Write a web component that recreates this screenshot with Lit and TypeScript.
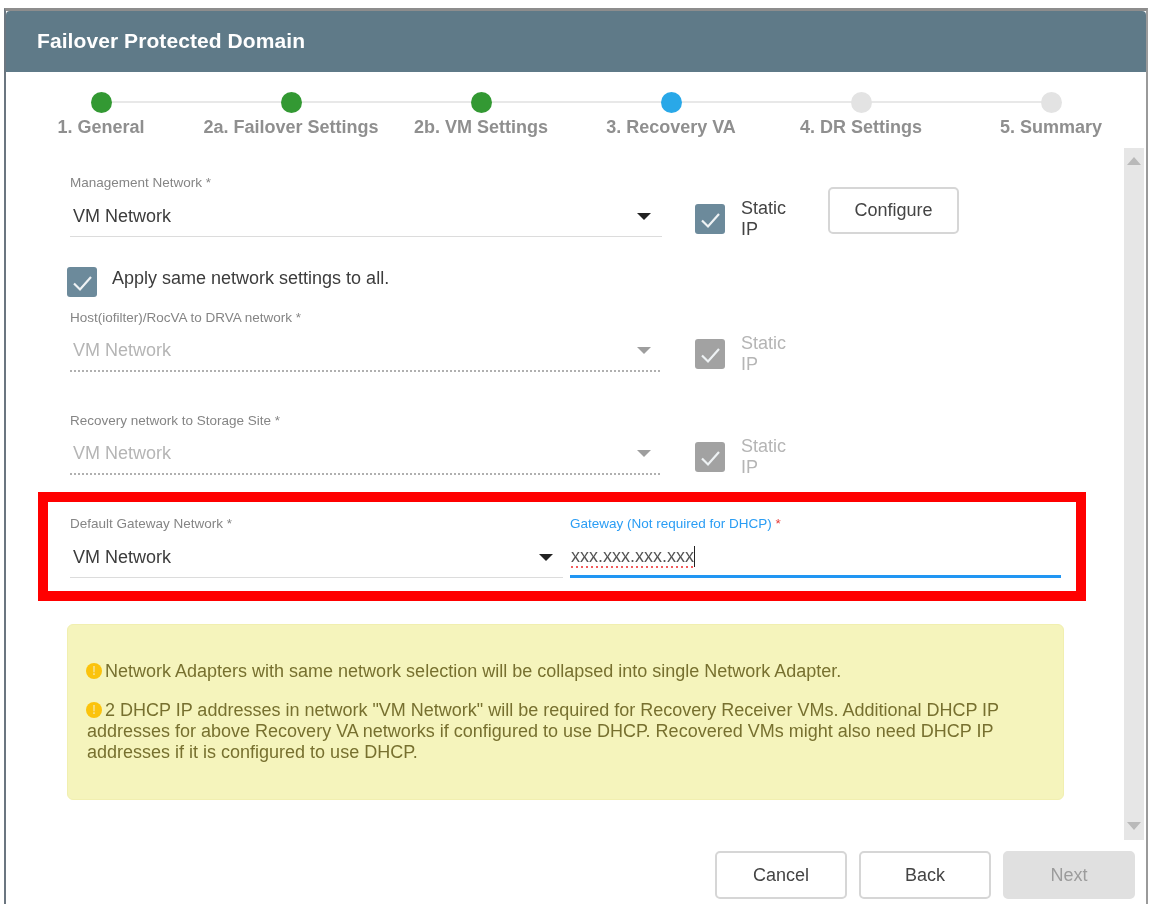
import { LitElement, html, css, svg } from "lit";
import { customElement } from "lit/decorators.js";

const STEPS = [
  { label: "1. General", state: "done" },
  { label: "2a. Failover Settings", state: "done" },
  { label: "2b. VM Settings", state: "done" },
  { label: "3. Recovery VA", state: "active" },
  { label: "4. DR Settings", state: "todo" },
  { label: "5. Summary", state: "todo" },
];

const check = svg`<svg class="tick" viewBox="0 0 30 30" width="30" height="30"><path d="M7 16.5L13 22.5 24 10" fill="none" stroke="#eef2f4" stroke-width="2.2"/></svg>`;

@customElement("app-root")
export class AppRoot extends LitElement {
  static styles = css`
    :host {
      display: block;
      width: 1156px;
      height: 904px;
      overflow: hidden;
      background: #fff;
      font-family: "Liberation Sans", Arial, sans-serif;
      color: #444;
      padding-top: 8px;
      box-sizing: border-box;
    }
    .modal {
      margin-left: 4px;
      width: 1144px;
      height: 896px;
      box-sizing: border-box;
      border-top: 3px solid #8d8d8d;
      border-left: 2px solid #6b7680;
      border-right: 2px solid #9a9a9a;
      background: #fff;
      display: flex;
      flex-direction: column;
      filter: blur(0.4px);
    }
    .title {
      height: 61px;
      flex: none;
      background: #5f7a88;
      color: #fff;
      font-size: 21px;
      font-weight: 700;
      letter-spacing: 0.08px;
      line-height: 59px;
      padding-left: 31px;
      border-radius: 4px 4px 0 0;
    }
    .stepper {
      flex: none;
      height: 76px;
      display: grid;
      grid-template-columns: repeat(6, 1fr);
      padding-top: 20px;
      box-sizing: border-box;
    }
    .step {
      position: relative;
      display: flex;
      flex-direction: column;
      align-items: center;
    }
    .step::before {
      content: "";
      position: absolute;
      top: 9px;
      left: 0;
      right: 0;
      height: 2px;
      background: #e8e8e8;
    }
    .step:first-child::before { left: 50%; }
    .step:last-child::before { right: 50%; }
    .dot {
      position: relative;
      width: 21px;
      height: 21px;
      border-radius: 50%;
    }
    .dot.done { background: #339933; }
    .dot.active { background: #29a8e8; }
    .dot.todo { background: #e3e3e3; }
    .step-label {
      margin-top: 4px;
      font-size: 18px;
      line-height: 21px;
      font-weight: 700;
      color: #8f8f8f;
      white-space: nowrap;
    }
    .main {
      flex: 1;
      display: flex;
      min-height: 0;
    }
    .content {
      flex: 1;
      padding: 28px 0 0 61px;
      box-sizing: border-box;
    }
    .scrollbar {
      flex: none;
      width: 20px;
      margin-right: 2px;
      background: #e6e6e6;
      display: flex;
      flex-direction: column;
      justify-content: space-between;
      align-items: center;
      padding: 9px 0;
      box-sizing: border-box;
    }
    .row {
      display: flex;
      align-items: flex-start;
    }
    .row.host { margin-top: 14px; }
    .row.recovery { margin-top: 42px; }
    .field {
      width: 592px;
      margin-left: 3px;
      flex: none;
    }
    .field-label {
      font-size: 13.5px;
      line-height: 14px;
      color: #858585;
      white-space: nowrap;
    }
    .value {
      margin-top: 6px;
      height: 40px;
      display: flex;
      align-items: center;
      justify-content: space-between;
      padding: 0 11px 0 3px;
      font-size: 18px;
      color: #3c3c3c;
      border-bottom: 1px solid #dcdcdc;
    }
    .caret {
      width: 0;
      height: 0;
      border-left: 7px solid transparent;
      border-right: 7px solid transparent;
      border-top: 7px solid #222;
    }
    .disabled .value {
      color: #b5b5b5;
      border-bottom: 0;
      height: 39px;
      padding-bottom: 2px;
      background-image: linear-gradient(90deg, #b0b0b0 40%, transparent 40%);
      background-size: 4px 2px;
      background-repeat: repeat-x;
      background-position: left bottom;
    }
    .disabled .caret { border-top-color: #9e9e9e; }
    .check-group {
      display: flex;
      align-items: center;
      margin: 28px 0 0 33px;
      height: 30px;
    }
    .box {
      flex: none;
      width: 30px;
      height: 30px;
      border-radius: 3px;
      background: #6c8a9b;
    }
    .tick { display: block; }
    .static {
      width: 50px;
      margin-left: 16px;
      font-size: 18px;
      line-height: 21px;
      color: #444;
    }
    .disabled .box { background: #a2a2a2; }
    .disabled .static { color: #b5b5b5; }
    .btn {
      flex: none;
      box-sizing: border-box;
      width: 132px;
      height: 48px;
      border: 2px solid #d6d6d6;
      border-radius: 5px;
      background: #fff;
      color: #444;
      font: inherit;
      font-size: 18px;
      padding: 0;
    }
    .btn.configure {
      margin: 11px 0 0 37px;
      width: 131px;
      height: 47px;
    }
    .btn.next {
      background: #e0e0e0;
      border-color: #e0e0e0;
      color: #9c9c9c;
    }
    .apply {
      margin-top: 30px;
      display: flex;
      align-items: center;
      gap: 15px;
      font-size: 18px;
      color: #3c3c3c;
      height: 30px;
    }
    .apply .apply-text { transform: translateY(-4px); }
    .red {
      box-sizing: border-box;
      width: 1048px;
      margin: 17px 0 0 -29px;
      height: 109px;
      border: 10px solid #ff0000;
      padding: 15px 0 0 22px;
      display: flex;
      gap: 7px;
    }
    .red .field {
      width: 493px;
      margin-left: 0;
    }
    .red .value { padding-right: 10px; }
    .gateway {
      width: 491px;
      flex: none;
    }
    .gateway .field-label { color: #2a9df4; }
    .gateway .req { color: #e53935; }
    .gateway .input {
      margin-top: 6px;
      height: 38px;
      box-sizing: content-box;
      border-bottom: 3px solid #2196f3;
      display: flex;
      align-items: center;
      padding-left: 1px;
      font-size: 18px;
      color: #555;
    }
    .typed {
      padding-bottom: 2px;
      line-height: 19px;
      transform: translateY(1px);
      background-image: linear-gradient(90deg, #f25c5c 50%, transparent 50%);
      background-size: 5px 2px;
      background-repeat: repeat-x;
      background-position: left bottom;
    }
    .cursor {
      width: 1px;
      height: 21px;
      background: #222;
    }
    .note {
      box-sizing: border-box;
      width: 997px;
      height: 176px;
      margin-top: 23px;
      background: #f5f4bc;
      border: 1px solid #f1efb0;
      border-radius: 6px;
      padding: 36px 40px 0 19px;
      font-size: 18px;
      line-height: 21px;
      color: #77702f;
    }
    .note p {
      margin: 0 0 18px;
    }
    .warn {
      display: inline-block;
      width: 16px;
      height: 16px;
      margin: 0 3px 0 -1px;
      border-radius: 50%;
      background: #fbc30c;
      color: #f7e08a;
      font-size: 12px;
      line-height: 16px;
      font-weight: 700;
      text-align: center;
      vertical-align: 2px;
    }
    .footer {
      flex: none;
      height: 64px;
      display: flex;
      justify-content: flex-end;
      gap: 12px;
      padding: 11px 11px 0 0;
      box-sizing: border-box;
    }
  `;

  private select(label: string) {
    return html`<div class="field">
      <div class="field-label">${label} *</div>
      <div class="value">VM Network<span class="caret"></span></div>
    </div>`;
  }

  private staticIp() {
    return html`<div class="check-group">
      <span class="box">${check}</span>
      <span class="static">Static IP</span>
    </div>`;
  }

  render() {
    return html`<div class="modal">
      <div class="title">Failover Protected Domain</div>
      <div class="stepper">
        ${STEPS.map(
          (s) => html`<div class="step">
            <span class="dot ${s.state}"></span>
            <span class="step-label">${s.label}</span>
          </div>`
        )}
      </div>
      <div class="main">
        <div class="content">
          <div class="row">
            ${this.select("Management Network")} ${this.staticIp()}
            <button class="btn configure">Configure</button>
          </div>
          <div class="apply">
            <span class="box">${check}</span>
            <span class="apply-text">Apply same network settings to all.</span>
          </div>
          <div class="row host disabled">
            ${this.select("Host(iofilter)/RocVA to DRVA network")} ${this.staticIp()}
          </div>
          <div class="row recovery disabled">
            ${this.select("Recovery network to Storage Site")} ${this.staticIp()}
          </div>
          <div class="red">
            ${this.select("Default Gateway Network")}
            <div class="gateway">
              <div class="field-label">Gateway (Not required for DHCP) <span class="req">*</span></div>
              <div class="input"><span class="typed">xxx.xxx.xxx.xxx</span><span class="cursor"></span></div>
            </div>
          </div>
          <div class="note">
            <p><span class="warn">!</span>Network Adapters with same network selection will be collapsed into single Network Adapter.</p>
            <p><span class="warn">!</span>2 DHCP IP addresses in network "VM Network" will be required for Recovery Receiver VMs. Additional DHCP IP addresses for above Recovery VA networks if configured to use DHCP. Recovered VMs might also need DHCP IP addresses if it is configured to use DHCP.</p>
          </div>
        </div>
        <div class="scrollbar">
          <svg width="16" height="9" viewBox="0 0 16 9"><path d="M8 0l7 8H1z" fill="#b9b9b9"/></svg>
          <svg width="16" height="9" viewBox="0 0 16 9"><path d="M1 0h14L8 8z" fill="#b9b9b9"/></svg>
        </div>
      </div>
      <div class="footer">
        <button class="btn">Cancel</button>
        <button class="btn">Back</button>
        <button class="btn next">Next</button>
      </div>
    </div>`;
  }
}
